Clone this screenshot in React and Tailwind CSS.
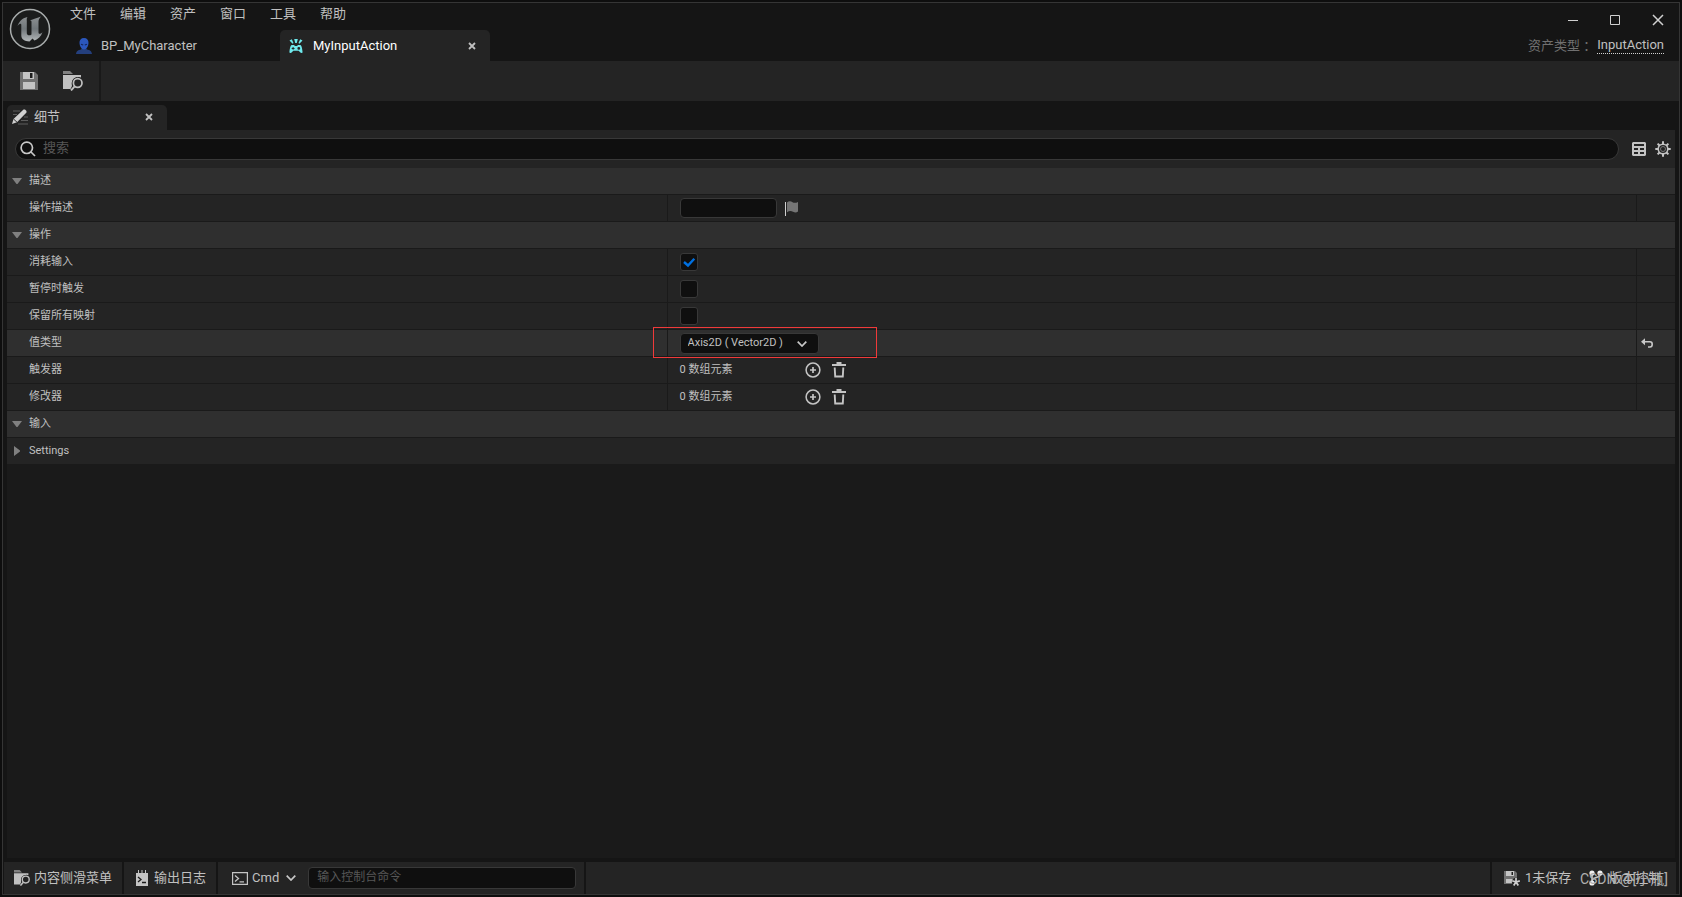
import React, { useState } from "react";

const FONT = "font-['Roboto','Noto_Sans_CJK_SC',sans-serif]";

const menus = ["文件", "编辑", "资产", "窗口", "工具", "帮助"];

const EngineLogo = () => (
  <svg viewBox="0 0 42 42" className="h-[42px] w-[42px]" aria-hidden="true">
    <defs>
      <linearGradient id="metal" x1="0" y1="0" x2="0" y2="1">
        <stop offset="0" stopColor="#8c9092" />
        <stop offset="0.5" stopColor="#70767a" />
        <stop offset="1" stopColor="#b4b8ba" />
      </linearGradient>
    </defs>
    <circle cx="21" cy="21" r="19.5" fill="#1b1c1c" stroke="#a9adad" strokeWidth="1.5" />
    <path
      d="M8.5 18C10.5 12.5 14 9.800 18.500 9C17.500 10.200 17.800 11.500 17.800 13V25.500C18.500 27.500 20.500 28 22.500 26.500V14C22.500 13 22 12.300 21 12.300C23 11.500 27.500 10.500 32 8.500C30 10.500 29.500 12 29.500 14V24.500C29.500 26 31 26.500 33.500 24.200C32 28.500 29 31 25.500 32.500L23.500 30.500L20.500 33.500C15.500 33.300 12.300 31 12.300 27.500V17C12.300 15 10.500 15.500 8.500 18Z"
      fill="url(#metal)"
    />
  </svg>
);

const PersonIcon = () => (
  <svg viewBox="0 0 16 16" className="h-4 w-4" aria-hidden="true">
    <path d="M0 16C.3 12.700 2.500 12 5 11.500L6 10H10L11 11.500C13.500 12 15.700 12.700 16 16Z" fill="#243f7d" />
    <path d="M8 0C11 0 12.700 2 12.500 5C12.300 8.500 10.500 11.500 8 11.500S3.700 8.500 3.500 5C3.300 2 5 0 8 0Z" fill="#2b57bd" />
    <path d="M5 6.200L7.200 7M11 6.200L8.800 7" stroke="#14255a" strokeWidth="1.200" />
  </svg>
);

const InputActionIcon = () => (
  <svg viewBox="0 0 14 14" className="h-[14px] w-[14px]" fill="#6fe9ec" aria-hidden="true">
    <path d="M5.200 0H8.800L7.800 4H6.200ZM.5 1.400L2.800 .3L4.500 4L3.600 4.800ZM13.500 1.400L11.200 .3L9.500 4L10.400 4.800Z" />
    <path
      fillRule="evenodd"
      d="M3.300 6H5L6 7H8L9 6H10.700C12.300 6 13 7.500 13.600 13.200C13.500 14.300 11.700 14.200 10.900 13L9.700 11.700H4.300L3.100 13C2.300 14.200 .5 14.300 .4 13.200C1 7.500 1.700 6 3.300 6ZM3.600 8V8.900H2.700V9.900H3.600V10.800H4.600V9.900H5.500V8.900H4.600V8ZM9.800 8A1.400 1.400 0 1 0 9.800 10.800A1.400 1.400 0 1 0 9.800 8Z"
    />
  </svg>
);

const SaveIcon = () => (
  <svg viewBox="0 0 18 18" className="h-[18px] w-[18px]" aria-hidden="true">
    <path d="M0 0H15L18 3V18H0Z" fill="#707070" />
    <path d="M3 0H14V7H3ZM3 10H15V17H3Z" fill="#c4c4c4" />
    <path d="M10 1H12.500V6H10Z" fill="#1c1c1c" />
  </svg>
);

const BrowseIcon = ({ className }) => (
  <svg viewBox="0 0 20 20" className={className} aria-hidden="true">
    <path d="M0 0H7L10 3H0Z" fill="#808080" />
    <path d="M0 4H18V6.500A7 7 0 0 0 9 15L7.500 18H0Z" fill="#c0c0c0" />
    <circle cx="14.700" cy="12" r="5.900" fill="#242424" />
    <circle cx="14.700" cy="12" r="4.300" fill="none" stroke="#c0c0c0" strokeWidth="1.700" />
    <path d="M11.700 15.300L8 19.500" stroke="#c0c0c0" strokeWidth="1.900" />
  </svg>
);

const PencilIcon = () => (
  <svg viewBox="0 0 16 16" className="h-4 w-4" aria-hidden="true">
    <path d="M1 2H8M1 5.500H5M12 8H16M9 11.500H16M6 15H16" stroke="#5d5d5d" strokeWidth="1.200" />
    <path d="M0 15L1.500 10L10.500 1.500L11.500 0.500H13L14.500 2V3.500L5 13.200Z" fill="#d0d0d0" />
    <path d="M1.500 10L5 13.200" stroke="#333" strokeWidth="1" />
  </svg>
);

const CloseIcon = () => (
  <svg viewBox="0 0 8 8" className="h-2 w-2" aria-hidden="true">
    <path d="M1 1L7 7M7 1L1 7" stroke="#c0c0c0" strokeWidth="1.800" />
  </svg>
);

const SearchIcon = () => (
  <svg viewBox="0 0 16 16" className="h-4 w-4 shrink-0" fill="none" stroke="#c8c8c8" strokeWidth="1.700" aria-hidden="true">
    <circle cx="6.800" cy="6.800" r="5.700" />
    <path d="M11 11L15 15" />
  </svg>
);

const TableIcon = () => (
  <svg viewBox="0 0 14 14" className="h-[14px] w-[14px]" aria-hidden="true">
    <path
      fillRule="evenodd"
      fill="#c4c4c4"
      d="M1 0H13L14 1V13L13 14H1L0 13V1ZM2 2V4H12V2ZM2 6V8H6V6ZM8 6V8H12V6ZM2 10V12H6V10ZM8 10V12H12V10Z"
    />
  </svg>
);

const GearIcon = () => (
  <svg viewBox="0 0 16 16" className="h-4 w-4" fill="none" stroke="#c4c4c4" aria-hidden="true">
    <circle cx="8" cy="8" r="4.800" strokeWidth="1.600" />
    <circle cx="8" cy="8" r="2.500" stroke="#777" strokeWidth="1" />
    <path
      d="M8 .3V3M8 13V15.700M.3 8H3M13 8H15.700M2.600 2.600L4.500 4.500M11.500 11.500L13.400 13.400M2.600 13.400L4.500 11.500M11.500 4.500L13.400 2.600"
      strokeWidth="2"
    />
  </svg>
);

const FlagIcon = () => (
  <svg viewBox="0 0 14 16" className="h-4 w-[14px]" aria-hidden="true">
    <path d="M.5 2V16" stroke="#d0d0d0" />
    <path d="M2 2.500C4 .7 6 1.200 7.500 2.200S11 3 13 2V11.500C11.500 12.800 10 13 8 11.800S4 10.800 2 12.300Z" fill="#757575" />
  </svg>
);

const ChevronIcon = () => (
  <svg viewBox="0 0 10 6" className="h-[6px] w-[10px]" fill="none" stroke="#c8c8c8" strokeWidth="1.700" aria-hidden="true">
    <path d="M.7 .7L5 5L9.300 .7" />
  </svg>
);

const AddIcon = () => (
  <svg viewBox="0 0 16 16" className="h-4 w-4" fill="none" stroke="#c4c4c4" aria-hidden="true">
    <circle cx="8" cy="8" r="6.900" strokeWidth="1.500" />
    <path d="M8 5V11M5 8H11" strokeWidth="1.700" />
  </svg>
);

const TrashIcon = () => (
  <svg viewBox="0 0 14 16" className="h-4 w-[14px]" fill="none" stroke="#c4c4c4" aria-hidden="true">
    <path d="M0 3H14" strokeWidth="2" />
    <path d="M4.500 1H9.500" strokeWidth="2" />
    <path d="M2.700 5.500L3.200 14.500H10.800L11.300 5.500" strokeWidth="1.900" />
  </svg>
);

const ResetIcon = () => (
  <svg viewBox="0 0 12 10" className="h-[10px] w-3" aria-hidden="true">
    <path d="M0 3.800L4 .3V7.300Z" fill="#c8c8c8" />
    <path d="M3 3.800H9C10.600 3.800 11.200 5 11.200 6.200S10.500 9 9 9H7" fill="none" stroke="#c8c8c8" strokeWidth="1.600" />
  </svg>
);

const LogIcon = () => (
  <svg viewBox="0 0 12 16" className="h-4 w-3" aria-hidden="true">
    <path d="M0 3H2V0H3V3H5.500V0H6.500V3H9V0H10V3H12V16H0Z" fill="#c4c4c4" />
    <path d="M2 7L5 9.500L2 12M6 12.500H10" fill="none" stroke="#1c1c1c" strokeWidth="1.300" />
  </svg>
);

const TerminalIcon = () => (
  <svg viewBox="0 0 16 13" className="h-[13px] w-4" fill="none" stroke="#c4c4c4" aria-hidden="true">
    <path d="M.6 .6H15.400V12.400H.6Z" strokeWidth="1.200" />
    <path d="M3 3.500L6.500 6.500L3 9.500M7.500 9.800H12" strokeWidth="1.300" />
  </svg>
);

const UnsavedIcon = () => (
  <svg viewBox="0 0 16 15" className="h-[15px] w-4" aria-hidden="true">
    <path d="M0 0H11L13 2V13H0Z" fill="#707070" />
    <path d="M2 0H10V5H2ZM2 8H9V12H2Z" fill="#c4c4c4" />
    <path d="M7.500 1H9V4H7.500Z" fill="#1c1c1c" />
    <circle cx="12" cy="11" r="4.200" fill="#242424" />
    <path d="M12 7V11M12 11L8.200 9.800M12 11L15.800 9.800M12 11L9.700 14.500M12 11L14.300 14.500" stroke="#d0d0d0" strokeWidth="1.700" />
  </svg>
);

const BranchIcon = () => (
  <svg viewBox="0 0 14 16" className="h-4 w-[14px]" fill="#f0f0f0" aria-hidden="true">
    <path d="M3 3V13M11 3V5C11 8 3 7 3 11" fill="none" stroke="#c4c4c4" strokeWidth="1.600" />
    <circle cx="3" cy="3" r="2.600" />
    <circle cx="11" cy="3" r="2.600" />
    <circle cx="3" cy="13" r="2.600" />
  </svg>
);

const IconButton = ({ label, children, className = "" }) => (
  <button type="button" aria-label={label} className={`flex items-center justify-center ${className}`}>
    {children}
  </button>
);

const SectionRow = ({ title, open = true }) => (
  <button
    type="button"
    aria-expanded={open}
    className={`flex h-[27px] w-full items-center border-b border-[#1a1a1a] pl-[5px] text-left ${open ? "bg-[#2f2f2f]" : "bg-[#242424]"}`}
  >
    <svg viewBox="0 0 10 10" className="mr-[7px] h-[10px] w-[10px]" fill="#808080" aria-hidden="true">
      {open ? <path d="M0 2H10L5.500 8H4.500Z" /> : <path d="M2 0L8 4.500V5.500L2 10Z" />}
    </svg>
    <span>{title}</span>
  </button>
);

const PropertyRow = ({ label, htmlFor, children, modified = false }) => (
  <div className={`flex h-[27px] border-b border-[#1a1a1a] ${modified ? "bg-[#2f2f2f]" : "bg-[#242424]"}`}>
    <div className="flex w-[39.6%] shrink-0 items-center border-r border-[#1a1a1a] pl-[22px]">
      {htmlFor ? <label htmlFor={htmlFor}>{label}</label> : <span>{label}</span>}
    </div>
    <div className="flex min-w-0 flex-1 items-center pl-3">{children}</div>
    <div className="flex w-[39px] shrink-0 items-center border-l border-[#1a1a1a] pl-1">
      {modified && (
        <IconButton label="重置">
          <ResetIcon />
        </IconButton>
      )}
    </div>
  </div>
);

const CheckBox = ({ id, defaultChecked = false }) => {
  const [checked, setChecked] = useState(defaultChecked);
  return (
    <span className="relative flex h-[18px] w-[18px]">
      <input
        id={id}
        type="checkbox"
        checked={checked}
        onChange={(e) => setChecked(e.target.checked)}
        className="h-[18px] w-[18px] appearance-none rounded-[3px] border border-[#383838] bg-[#0f0f0f]"
      />
      {checked && (
        <svg viewBox="0 0 18 18" className="pointer-events-none absolute inset-0" fill="none" aria-hidden="true">
          <path d="M4 9L8 12.500L14.300 5.800" stroke="#0070e0" strokeWidth="2.400" />
        </svg>
      )}
    </span>
  );
};

const ArrayValue = () => (
  <>
    <span className="w-[125px]">0 数组元素</span>
    <IconButton label="添加元素" className="mr-[11px]">
      <AddIcon />
    </IconButton>
    <IconButton label="清空">
      <TrashIcon />
    </IconButton>
  </>
);

const TitleBar = () => (
  <header className="flex h-[58px] bg-[#151515]">
    <div className="w-[60px] shrink-0 pl-[6px] pt-[5px]">
      <EngineLogo />
    </div>
    <div className="flex flex-1 flex-col justify-between">
      <nav className="flex h-[22px] items-center gap-6 pl-[7px]">
        {menus.map((item) => (
          <button key={item} type="button" className="w-[26px] whitespace-nowrap">
            {item}
          </button>
        ))}
      </nav>
      <div className="flex h-[31px]">
        <button type="button" className="flex w-[217px] items-center pl-[13px]">
          <PersonIcon />
          <span className="ml-[9px]">BP_MyCharacter</span>
        </button>
        <div className="flex w-[210px] items-center rounded-t-[5px] bg-[#242424] pl-[9px] text-white">
          <InputActionIcon />
          <span className="ml-[10px] flex-1">MyInputAction</span>
          <IconButton label="关闭" className="mr-[14px]">
            <CloseIcon />
          </IconButton>
        </div>
      </div>
    </div>
    <div className="flex flex-col items-end justify-between pb-[6px] pr-[15px] pt-[11px]">
      <div className="flex items-center gap-8">
        <IconButton label="最小化">
          <svg viewBox="0 0 10 10" className="h-[10px] w-[10px]" stroke="#d0d0d0" aria-hidden="true">
            <path d="M0 5.500H10" />
          </svg>
        </IconButton>
        <IconButton label="最大化">
          <svg viewBox="0 0 10 10" className="h-[10px] w-[10px]" fill="none" stroke="#d0d0d0" aria-hidden="true">
            <path d="M.5 .5H9.500V9.500H.5Z" />
          </svg>
        </IconButton>
        <IconButton label="关闭窗口">
          <svg viewBox="0 0 12 12" className="h-3 w-3" stroke="#d0d0d0" strokeWidth="1.500" aria-hidden="true">
            <path d="M1 1L11 11M11 1L1 11" />
          </svg>
        </IconButton>
      </div>
      <div className="flex items-center">
        <span className="mr-px text-[#707070]">资产类型 ：</span>
        <a href="#asset" className="border-b border-dotted border-[#d0d0d0] leading-4">
          InputAction
        </a>
      </div>
    </div>
  </header>
);

const StatusBar = () => (
  <footer className="flex h-8 gap-[2px] text-[13px]">
    <button type="button" className="flex items-center bg-[#242424] pl-[10px] pr-[10px]">
      <BrowseIcon className="h-4 w-4" />
      <span className="ml-1">内容侧滑菜单</span>
    </button>
    <button type="button" className="flex items-center bg-[#242424] pl-3 pr-[10px]">
      <LogIcon />
      <span className="ml-[6px]">输出日志</span>
    </button>
    <div className="flex items-center bg-[#242424] pl-[14px] pr-2">
      <button type="button" className="flex items-center">
        <TerminalIcon />
        <span className="ml-1 mr-[7px]">Cmd</span>
        <ChevronIcon />
      </button>
      <input
        type="text"
        aria-label="输入控制台命令"
        placeholder="输入控制台命令"
        className="ml-3 h-[22px] w-[268px] rounded-[4px] border border-[#383838] bg-[#0f0f0f] pb-[2px] pl-2 text-xs outline-none placeholder:text-[#575757]"
      />
    </div>
    <div className="flex-1 bg-[#242424]" />
    <div className="relative flex w-[184px] items-center bg-[#242424] pl-3">
      <button type="button" className="flex items-center">
        <UnsavedIcon />
        <span className="ml-[5px]">1未保存</span>
      </button>
      <button type="button" className="ml-[18px] flex items-center">
        <BranchIcon />
        <span className="ml-[6px] whitespace-nowrap">版本控制</span>
      </button>
      <span className="absolute right-2 top-[9px] whitespace-nowrap text-sm leading-4 text-[#b0b0b0]">CSDN @[小瓶]</span>
    </div>
  </footer>
);

export default function App() {
  return (
    <div className={`h-screen bg-[#0e0e0e] p-[2px] text-[13px] text-[#c0c0c0] ${FONT}`}>
      <div className="flex h-full flex-col border border-[#353535] bg-[#151515]">
        <TitleBar />

        <div className="flex h-10 bg-[#242424]">
          <div className="flex w-[98px] items-center border-r-2 border-[#191919] pl-[17px]">
            <IconButton label="保存">
              <SaveIcon />
            </IconButton>
            <IconButton label="浏览" className="ml-[25px]">
              <BrowseIcon className="h-5 w-5" />
            </IconButton>
          </div>
        </div>

        <main className="mx-1 mb-1 mt-1 flex flex-1 flex-col bg-[#1a1a1a]">
          <div className="flex h-[25px] bg-[#151515]">
            <div className="flex w-40 items-center rounded-t-[5px] bg-[#242424] pb-[2px] pl-[5px]">
              <PencilIcon />
              <span className="ml-[6px] flex-1">细节</span>
              <IconButton label="关闭" className="mr-[14px]">
                <CloseIcon />
              </IconButton>
            </div>
          </div>

          <div className="flex h-[38px] items-center bg-[#242424] pl-2 pr-1">
            <div className="flex h-[22px] flex-1 items-center rounded-full border border-[#383838] bg-[#0f0f0f] pl-1">
              <SearchIcon />
              <input
                type="text"
                aria-label="搜索"
                placeholder="搜索"
                className="ml-[7px] flex-1 bg-transparent pb-[2px] outline-none placeholder:text-[#575757]"
              />
            </div>
            <IconButton label="表格" className="ml-[13px]">
              <TableIcon />
            </IconButton>
            <IconButton label="设置" className="ml-[9px]">
              <GearIcon />
            </IconButton>
          </div>

          <div className="text-[11px]">
            <SectionRow title="描述" />
            <PropertyRow label="操作描述" htmlFor="description">
              <input
                id="description"
                type="text"
                className="mr-2 h-5 w-[97px] rounded-[4px] border border-[#383838] bg-[#0f0f0f] px-2 outline-none"
              />
              <IconButton label="本地化">
                <FlagIcon />
              </IconButton>
            </PropertyRow>
            <SectionRow title="操作" />
            <PropertyRow label="消耗输入" htmlFor="consume">
              <CheckBox id="consume" defaultChecked />
            </PropertyRow>
            <PropertyRow label="暂停时触发" htmlFor="paused">
              <CheckBox id="paused" />
            </PropertyRow>
            <PropertyRow label="保留所有映射" htmlFor="reserve">
              <CheckBox id="reserve" />
            </PropertyRow>
            <PropertyRow label="值类型" htmlFor="valueType" modified>
              <div className="relative">
                <div className="pointer-events-none absolute -left-[27px] -top-[6px] h-[31px] w-56 border border-[#f03a3a]" />
                <select
                  id="valueType"
                  className="block h-[21px] w-[139px] appearance-none rounded-[4px] border border-[#383838] bg-[#0f0f0f] pl-[7px] outline-none"
                >
                  <option>Axis2D ( Vector2D )</option>
                </select>
                <span className="pointer-events-none absolute right-3 top-2">
                  <ChevronIcon />
                </span>
              </div>
            </PropertyRow>
            <PropertyRow label="触发器">
              <ArrayValue />
            </PropertyRow>
            <PropertyRow label="修改器">
              <ArrayValue />
            </PropertyRow>
            <SectionRow title="输入" />
            <SectionRow title="Settings" open={false} />
          </div>
        </main>

        <div className="pl-px pr-[3px]">
          <StatusBar />
        </div>
      </div>
    </div>
  );
}
